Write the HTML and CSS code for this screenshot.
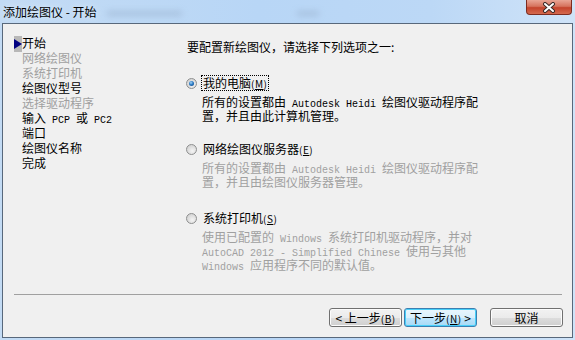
FILE: index.html
```html
<!DOCTYPE html>
<html lang="zh-CN">
<head>
    <meta charset="UTF-8">
    <title>添加绘图仪 - 开始</title>
    <link rel="stylesheet" href="styles.css">
</head>
<body>
    <div class="window">
        <div class="titlebar">
            <span class="title">添加绘图仪 - 开始</span>
            <span class="blur b1"></span>
            <span class="blur b2"></span>
            <button class="close" title="关闭">
                <svg width="14" height="11" viewBox="0 0 14 11">
                    <path d="M3 2 L11 9 M11 2 L3 9" stroke="#3a2a28" stroke-width="4" stroke-linecap="round"/>
                    <path d="M3 2 L11 9 M11 2 L3 9" stroke="#ffffff" stroke-width="2" stroke-linecap="round"/>
                </svg>
            </button>
        </div>

        <div class="panel">
            <div class="main">
                <ul class="steps">
                    <li class="current">开始</li>
                    <li class="off">网络绘图仪</li>
                    <li class="off">系统打印机</li>
                    <li>绘图仪型号</li>
                    <li class="off">选择驱动程序</li>
                    <li>输入<span class="m"> PCP </span>或<span class="m"> PC2</span></li>
                    <li>端口</li>
                    <li>绘图仪名称</li>
                    <li>完成</li>
                </ul>

                <div class="content">
                    <p class="lead">要配置新绘图仪，请选择下列选项之一:</p>

                    <div class="option first">
                        <div class="row">
                            <span class="radio checked"></span>
                            <span class="label focus">我的电脑<span class="key">(<u>M</u>)</span></span>
                        </div>
                        <p class="desc">所有的设置都由<span class="m"> Autodesk Heidi </span>绘图仪驱动程序配<br>置，并且由此计算机管理。</p>
                    </div>

                    <div class="option">
                        <div class="row">
                            <span class="radio"></span>
                            <span class="label">网络绘图仪服务器<span class="key">(<u>E</u>)</span></span>
                        </div>
                        <p class="desc off">所有的设置都由<span class="m"> Autodesk Heidi </span>绘图仪驱动程序配<br>置，并且由绘图仪服务器管理。</p>
                    </div>

                    <div class="option">
                        <div class="row">
                            <span class="radio"></span>
                            <span class="label">系统打印机<span class="key">(<u>S</u>)</span></span>
                        </div>
                        <p class="desc off">使用已配置的<span class="m"> Windows </span>系统打印机驱动程序，并对<br><span class="m">AutoCAD 2012 - Simplified Chinese </span>使用与其他<br><span class="m">Windows </span>应用程序不同的默认值。</p>
                    </div>
                </div>
            </div>

            <div class="separator"></div>

            <div class="buttons">
                <button class="btn">&lt; 上一步<span class="key">(<u>B</u>)</span></button>
                <button class="btn default">下一步<span class="key">(<u>N</u>)</span> &gt;</button>
                <button class="btn cancel">取消</button>
            </div>
        </div>
    </div>
</body>
</html>
```

FILE: styles.css
```css
html, body {
    margin: 0;
    padding: 0;
    overflow: hidden;
}
body {
    font-family: "Noto Sans CJK SC", sans-serif;
    font-size: 12px;
    color: #000;
}
.window {
    width: 575px;
    height: 340px;
    box-sizing: border-box;
    background: linear-gradient(to right, #c3dbf4 0%, #b8d6f6 45%, #bcd8f6 75%, #cfe3f8 100%);
    display: flex;
    flex-direction: column;
}
.titlebar {
    height: 23px;
    display: flex;
    align-items: flex-start;
}
.title {
    margin: 4px 0 0 3px;
    line-height: 15px;
    font-size: 12px;
    text-shadow: 0 0 6px #e6f1fc;
}
/* blurred stuff from the window behind */
.blur {
    height: 5px;
    margin-top: 11px;
    background: #9fb8d4;
    filter: blur(3px);
    opacity: 0.7;
}
.b1 {
    width: 75px;
    margin-left: 10px;
}
.b2 {
    width: 22px;
    margin-left: 115px;
}
.close {
    width: 46px;
    height: 15px;
    margin: 0 3px 0 auto;
    padding: 0;
    border: 1px solid #7d2c20;
    border-top: none;
    border-radius: 0 0 4px 4px;
    background: linear-gradient(#e9a595 0%, #d6735e 45%, #c4432c 55%, #d46a4f 100%);
    display: flex;
    align-items: center;
    justify-content: center;
}
.panel {
    flex: 1;
    margin: 0 2px 2px 2px;
    border: 1px solid #58687b;
    background: #f0f0f0;
    display: flex;
    flex-direction: column;
}
.main {
    height: 270px;
    display: flex;
}
.steps {
    list-style: none;
    margin: 0;
    box-sizing: border-box;
    width: 183px;
    padding: 11px 0 0 19px;
    line-height: 15px;
}
.steps li {
    position: relative;
    height: 15px;
    white-space: nowrap;
}
.steps li.off {
    color: #a0a0a0;
}
.steps li.current::before {
    content: "";
    position: absolute;
    left: -8px;
    top: 1px;
    width: 8px;
    height: 16px;
    background: #b8b8b8;
}
.steps li.current::after {
    content: "";
    position: absolute;
    left: -8px;
    top: 4px;
    border-left: 8px solid #000080;
    border-top: 5px solid transparent;
    border-bottom: 5px solid transparent;
}
.m {
    font-family: "Liberation Mono", monospace;
    font-size: 10px;
    line-height: 10px;
    white-space: pre;
}
.content {
    padding-top: 15px;
}
.lead {
    margin: 0 0 21px 1px;
    line-height: 15px;
}
.option {
    margin-bottom: 22px;
}
.option.first {
    margin-bottom: 19px;
}
.row {
    height: 16px;
    display: flex;
    align-items: center;
}
.radio {
    width: 11px;
    height: 11px;
    box-sizing: border-box;
    border-radius: 50%;
    border: 1px solid #8e8f8f;
    background: radial-gradient(circle at 60% 65%, #f4f4f4 0%, #d6d6d6 70%, #cfcfcf 100%);
    position: relative;
}
.radio.checked::after {
    content: "";
    position: absolute;
    left: 2px;
    top: 2px;
    width: 5px;
    height: 5px;
    border-radius: 50%;
    background: radial-gradient(circle at 40% 35%, #a6d6f8 0%, #2a7ac4 45%, #0b3f7c 100%);
}
.label {
    margin-left: 4px;
    padding: 0 1px;
    line-height: 14px;
    border: 1px dotted transparent;
}
.label.focus {
    border-color: #000;
}
.key {
    font-size: 10px;
    line-height: 10px;
    letter-spacing: 0.5px;
}
.desc {
    margin: 5px 0 0 16px;
    line-height: 12px;
}
.desc.off {
    color: #a0a0a0;
}
.separator {
    height: 1px;
    margin: 0 10px 0 11px;
    background: #a0a0a0;
}
.buttons {
    display: flex;
    justify-content: flex-end;
    margin-top: 13px;
    padding-right: 9px;
}
.btn {
    width: 73px;
    height: 19px;
    padding: 0;
    border: 1px solid #707070;
    border-radius: 3px;
    background: linear-gradient(#f2f2f2 0%, #ebebeb 50%, #dddddd 51%, #cfcfcf 100%);
    box-shadow: inset 0 0 0 1px #fcfcfc;
    font-family: "Noto Sans CJK SC", sans-serif;
    font-size: 12px;
    line-height: 15px;
    color: #000;
}
.btn.default {
    margin-left: 2px;
    border-color: #3c7fb1;
    background: linear-gradient(#eaf6fd 0%, #d9f0fc 50%, #bee6fd 51%, #a7d9f5 100%);
    box-shadow: inset 0 0 0 1px #48d0f9;
}
.btn.cancel {
    margin-left: 13px;
}
```
